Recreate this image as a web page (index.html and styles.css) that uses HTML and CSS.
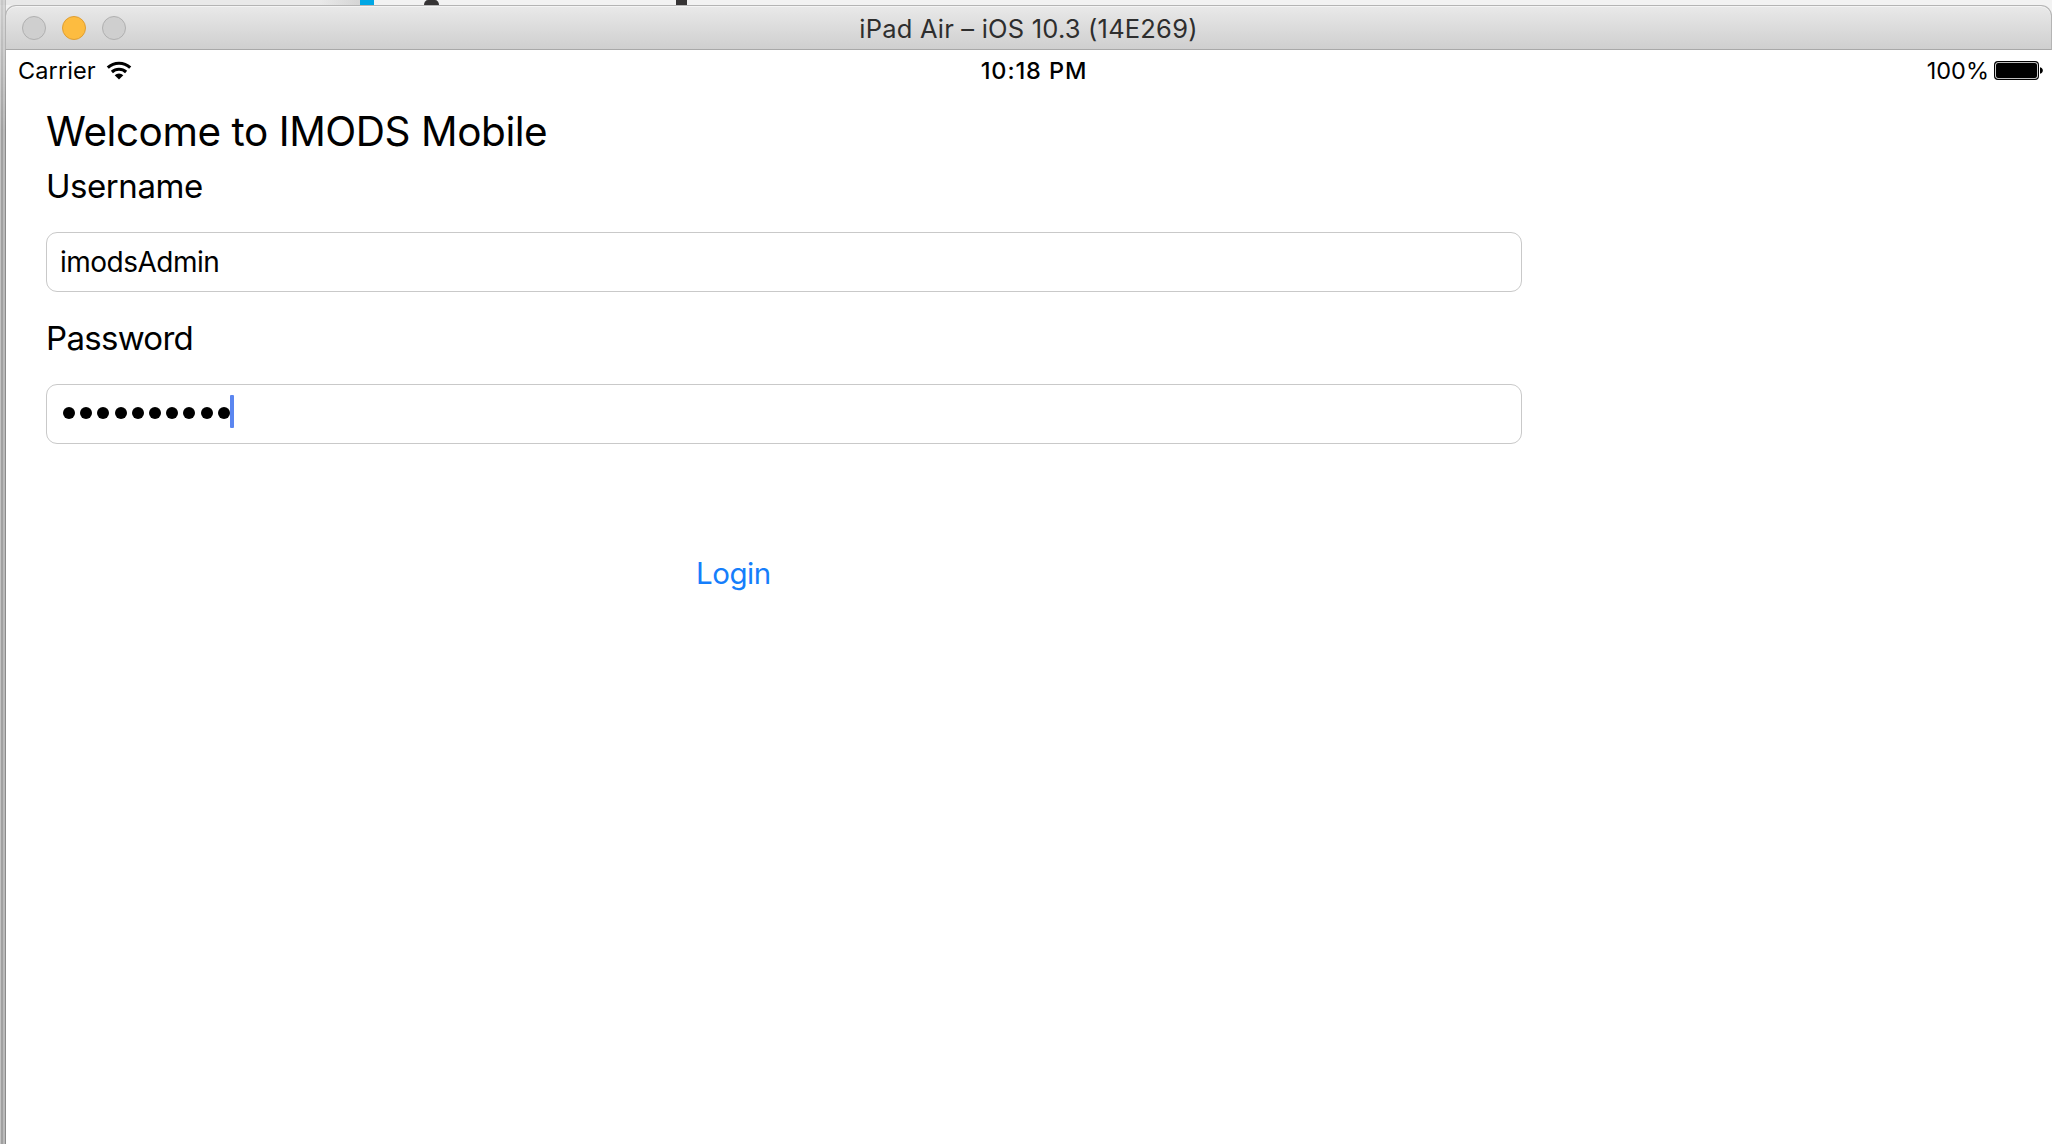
FILE: index.html
```
<!DOCTYPE html>
<html lang="en">
<head>
<meta charset="utf-8">
<title>iPad Air – iOS 10.3 (14E269)</title>
<link rel="stylesheet" href="styles.css">
</head>
<body>
<div class="desktop">
  <span class="behind behind-shade"></span>
  <span class="behind behind-blue"></span>
  <span class="behind behind-round"></span>
  <span class="behind behind-stem"></span>
  <div class="edge"></div>
  <main class="window">
    <header class="titlebar">
      <div class="lights">
        <span class="light"></span>
        <span class="light light-amber"></span>
        <span class="light"></span>
      </div>
      <h1 class="title"><span>iPad Air – iOS 10.3 (14E269)</span></h1>
      <div></div>
    </header>
    <section class="screen">
      <div class="status">
        <div class="status-left">
          <span class="carrier">Carrier</span>
          <svg class="wifi" viewBox="0 0 26 19" width="26" height="19">
            <path d="M1.8 6.6A16.4 16.4 0 0 1 24.2 6.6" fill="none" stroke="#000" stroke-width="3.1"/>
            <path d="M5.9 11A10.5 10.5 0 0 1 20.1 11" fill="none" stroke="#000" stroke-width="3.1"/>
            <path d="M13 18.4L8.7 14.2A6.2 6.2 0 0 1 17.3 14.2Z" fill="#000"/>
          </svg>
        </div>
        <span class="clock">10:18 PM</span>
        <div class="status-right">
          <span class="percent">100%</span>
          <svg class="battery" viewBox="0 0 50 20" width="50" height="20">
            <rect x=".6" y=".6" width="43.8" height="17.8" rx="3.4" fill="#fff" stroke="#000" stroke-width="1.2"/>
            <rect x="2" y="2" width="41" height="15" rx="2" fill="#000"/>
            <path d="M46 6.3C49.8 7 49.8 12 46 12.7Z" fill="#000"/>
          </svg>
        </div>
      </div>
      <form class="form">
        <h2 class="welcome">Welcome to IMODS Mobile</h2>
        <label class="label label-user">Username</label>
        <div class="field"><span class="value">imodsAdmin</span></div>
        <label class="label label-pass">Password</label>
        <div class="field field-pass">
          <i class="dot"></i><i class="dot"></i><i class="dot"></i><i class="dot"></i><i class="dot"></i><i class="dot"></i><i class="dot"></i><i class="dot"></i><i class="dot"></i><i class="dot"></i>
          <span class="caret"></span>
        </div>
        <a class="login">Login</a>
      </form>
    </section>
  </main>
</div>
</body>
</html>
```
FILE: styles.css
```
* { box-sizing: border-box; }
body { margin: 0; background: #fff; font-family: Inter, "Liberation Sans", sans-serif; color: #000; }
h1, h2 { margin: 0; font-weight: 400; }
.desktop { position: relative; display: grid; grid-template-columns: 6px 1fr; width: 2052px; height: 1144px; overflow: hidden; background: #f2f2f2; }
.behind { position: absolute; top: 0; height: 5px; }
.behind-shade { left: 0; width: 360px; background: linear-gradient(90deg, #e9e9e9 0 320px, #d6d6d6 358px); }
.behind-blue { left: 360px; width: 14px; height: 6px; background: #00a7e5; }
.behind-round { left: 424px; width: 15px; height: 6px; background: #363435; border-radius: 4px 4px 0 0 / 5px 5px 0 0; }
.behind-stem { left: 676px; width: 11px; height: 6px; background: #363435; }
.edge { position: relative; background: linear-gradient(90deg, #c4c4c4 0 1px, #a0a0a0 1px 3px, #bababa 3px 5px, #8a8a8a 5px); -webkit-mask-image: linear-gradient(rgba(0,0,0,.45), #000 130px); mask-image: linear-gradient(rgba(0,0,0,.45), #000 130px); }
.window { position: relative; height: 1139px; margin-top: 5px; }
.titlebar { display: grid; grid-template-columns: 200px 1fr 200px; align-items: center; height: 45px; margin-left: -1px; background: linear-gradient(#e9e9e9, #cfcfcf); border: 1px solid #b4b4b4; border-bottom-color: #a8a8a8; border-radius: 11px 11px 0 0; box-shadow: inset 0 1px #f4f4f4; }
.lights { display: flex; gap: 16px; padding-left: 16px; }
.light { width: 24px; height: 24px; border: 1px solid #b0b0b0; border-radius: 50%; background: #cfcfcf; }
.light-amber { background: #fdbc40; border-color: #df9e33; }
.title { padding-top: 2px; text-align: center; font-size: 25.5px; line-height: 32px; letter-spacing: .2px; color: #2e2e2e; }
.screen { height: 1094px; background: #fff; }
.status { display: grid; grid-template-columns: 1fr auto 1fr; align-items: center; height: 41px; padding: 0 8px 0 12px; font-size: 23.5px; line-height: 30px; }
.status-left, .status-right { display: flex; align-items: center; }
.status-left { gap: 10px; }
.carrier { letter-spacing: .1px; }
.status-right { justify-content: flex-end; gap: 5px; }
.clock { margin-left: 6px; font-weight: 550; letter-spacing: .9px; }
.form { display: flex; flex-direction: column; align-items: flex-start; padding-left: 40px; }
.welcome { height: 67px; padding-top: 16px; font-size: 40.5px; line-height: 50px; letter-spacing: -.45px; white-space: nowrap; }
.label { font-size: 33px; line-height: 42px; }
.label-user { height: 74px; padding-top: 7px; letter-spacing: -.45px; }
.label-pass { height: 92px; padding-top: 25px; letter-spacing: -.7px; }
.field { display: flex; align-items: center; width: 1476px; height: 60px; padding: 0 13px 1px; border: 1px solid #c9c9c9; border-radius: 11px; font-size: 28px; line-height: 34px; letter-spacing: -.5px; }
.field-pass { padding: 0 16px 2px; gap: 5.2px; }
.dot { width: 12px; height: 12px; border-radius: 50%; background: #000; }
.caret { width: 4px; height: 33px; margin: 0 0 4px -5px; border-radius: 1px; background: #5b86f0; }
.login { margin: 110px 0 0 650px; color: #157efb; font-size: 29.5px; line-height: 38px; letter-spacing: -.45px; }
```
